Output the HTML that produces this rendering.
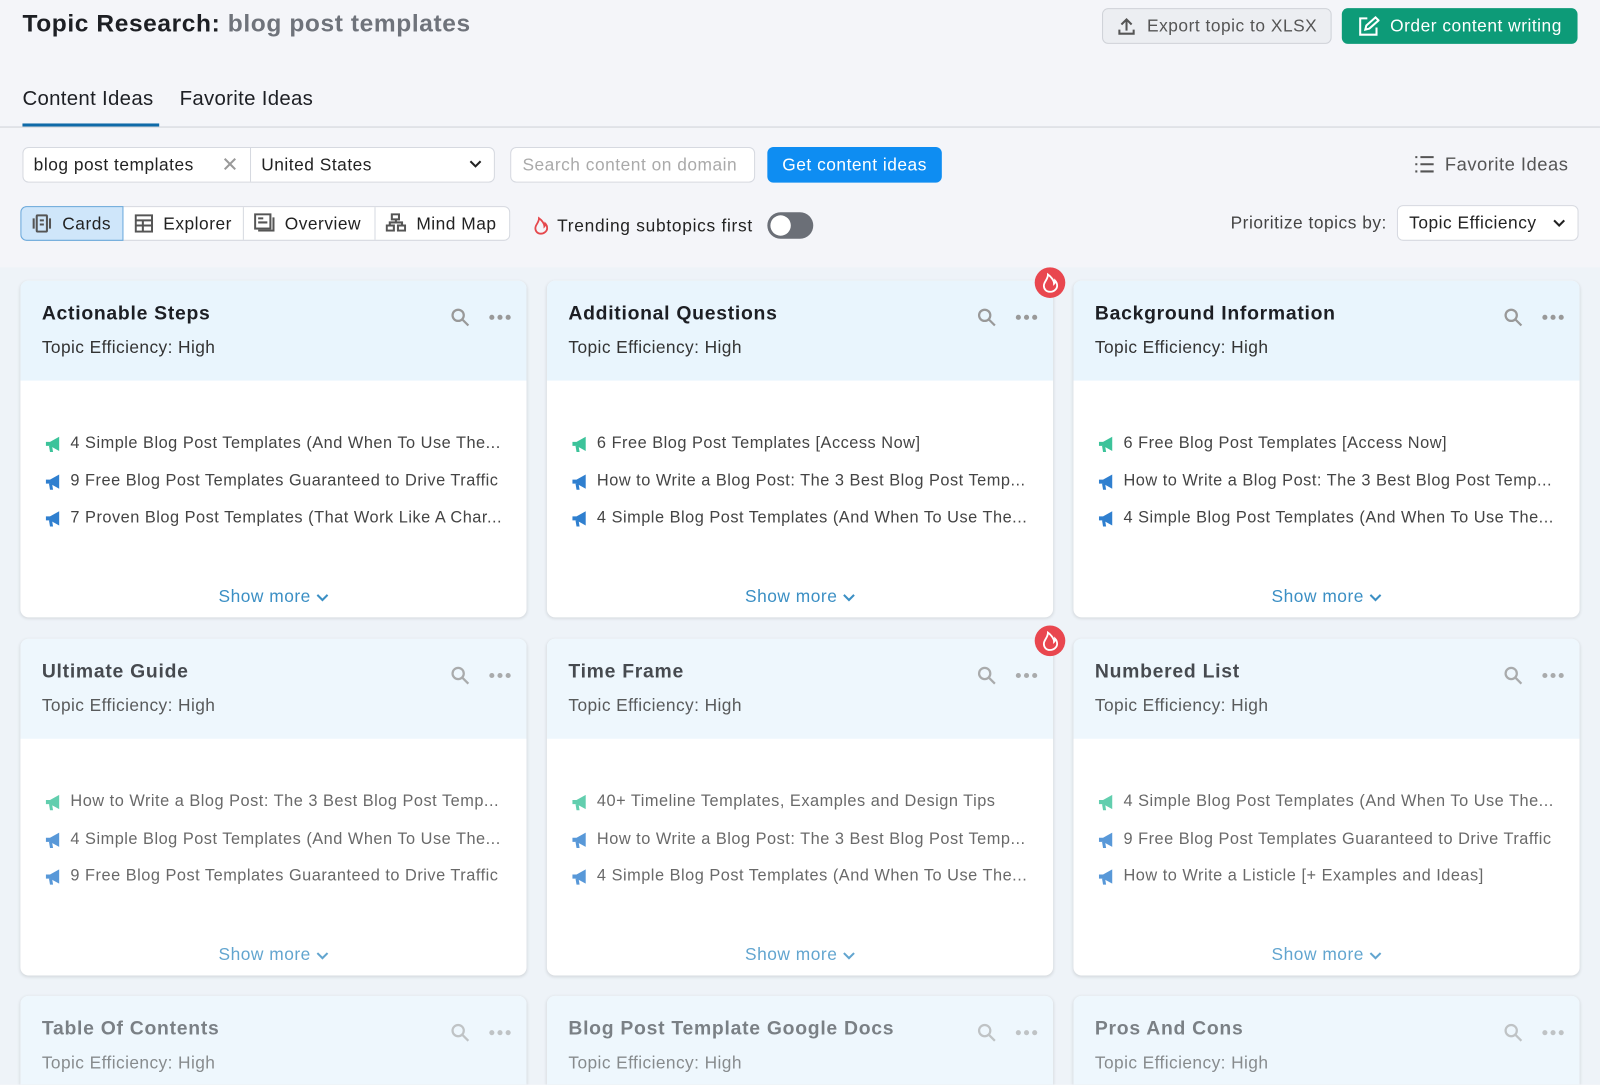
<!DOCTYPE html>
<html><head><meta charset="utf-8"><style>
*{box-sizing:border-box;margin:0;padding:0}
html,body{width:1600px;height:1085px;overflow:hidden;background:#f4f5f9;font-family:"Liberation Sans",sans-serif;letter-spacing:0.5px}
#w{position:absolute;left:0;top:0;width:1568px;height:1063px;transform:scale(1.0204);transform-origin:0 0;overflow:hidden}
.a{position:absolute;white-space:nowrap}
.btn{position:absolute;border-radius:6px;font-size:17px;display:flex;align-items:center;justify-content:center;gap:10px}
.box{position:absolute;background:#fff;border:1px solid #d6d9e0;border-radius:6px}
.card{position:absolute;width:496px;height:330px;background:#fff;border-radius:8px;box-shadow:0 1px 3px rgba(0,0,0,.12);overflow:hidden}
.hd{height:98px;background:#e9f5fd;padding:22px 21px;position:relative}
.t{font-size:19px;font-weight:bold;color:#1d1f24;letter-spacing:0.7px}
.e{font-size:17px;color:#333;margin-top:12px;letter-spacing:0.4px}
.ic{position:absolute;top:26px;right:15px;display:flex;gap:18px;align-items:center}
.it{font-size:16px;color:#444;height:36.5px;display:flex;align-items:center;gap:8px;padding-left:23px;letter-spacing:0.5px}
.items{padding-top:44px}
.sm{position:absolute;bottom:10px;left:0;width:100%;text-align:center;color:#3b8fc4;font-size:17px}
.fire{position:absolute;width:30px;height:30px;border-radius:50%;background:#e9474f;display:flex;align-items:center;justify-content:center}
</style></head><body><div id="w">
<div class="a" style="left:22px;top:10px;font-size:24px;font-weight:bold;color:#1d1f24;letter-spacing:0.6px">Topic Research: <span style="color:#6f737b">blog post templates</span></div>
<div class="btn" style="left:1080px;top:8px;width:225px;height:35px;background:#eceef2;border:1px solid #cfd2d8;color:#555">
<svg width="20" height="20" viewBox="0 0 20 20" fill="none" stroke="#555" stroke-width="2"><path d="M10 14V3M5 8l5-5 5 5M3 13v4h14v-4"/></svg>Export topic to XLSX</div>
<div class="btn" style="left:1315px;top:8px;width:231px;height:35px;background:#0d9b78;color:#fff">
<svg width="22" height="22" viewBox="0 0 22 22" fill="none" stroke="#fff" stroke-width="2"><path d="M10 3H3v16h16v-7M8 14l1-4 9-8 3 3-9 8z"/></svg>Order content writing</div>
<div class="a" style="left:22px;top:86px;font-size:20px;color:#1d1f24;letter-spacing:0.3px">Content Ideas</div>
<div class="a" style="left:176px;top:86px;font-size:20px;color:#1d1f24;letter-spacing:0.3px">Favorite Ideas</div>
<div class="a" style="left:22px;top:121px;width:134px;height:3px;background:#0f6aa8"></div>
<div class="a" style="left:0;top:124px;width:1568px;height:1px;background:#cfd2d8"></div>
<div class="box" style="left:22px;top:144px;width:463px;height:35px"></div>
<div class="a" style="left:245px;top:145px;width:1px;height:33px;background:#d6d9e0"></div>
<div class="a" style="left:33px;top:152px;font-size:17px;color:#222">blog post templates</div>
<div class="a" style="left:217px;top:149px;font-size:20px;color:#999">✕</div>
<div class="a" style="left:256px;top:152px;font-size:17px;color:#222">United States</div>
<svg class="a" style="left:459px;top:156px" width="14" height="10" viewBox="0 0 14 10" fill="none" stroke="#222" stroke-width="2"><path d="M2 2l5 5 5-5"/></svg>
<div class="box" style="left:500px;top:144px;width:240px;height:35px;color:#aaa;font-size:17px;padding:7px 11px">Search content on domain</div>
<div class="btn" style="left:752px;top:144px;width:171px;height:35px;background:#0e8df2;color:#fff">Get content ideas</div>
<svg class="a" style="left:1386px;top:152px" width="20" height="18" viewBox="0 0 20 18" fill="none" stroke="#555" stroke-width="2"><path d="M1 2h2M6 2h13M1 9h2M6 9h13M1 16h2M6 16h13"/></svg>
<div class="a" style="left:1416px;top:151px;font-size:18px;color:#555">Favorite Ideas</div>
<div class="box" style="left:20px;top:202px;width:480px;height:34px"></div>
<div class="a" style="left:20px;top:202px;width:101px;height:34px;background:#cfe6fa;border:1px solid #6aa9dc;border-radius:6px 0 0 6px"></div>
<div class="a" style="left:238px;top:203px;width:1px;height:32px;background:#d6d9e0"></div>
<div class="a" style="left:367px;top:203px;width:1px;height:32px;background:#d6d9e0"></div>
<svg class="a" style="left:31px;top:210px" width="20" height="18" viewBox="0 0 20 18" fill="none" stroke="#555" stroke-width="2"><rect x="5" y="1" width="10" height="16" rx="1"/><path d="M2 4v10M18 4v10M8 6h4M8 10h4"/></svg>
<div class="a" style="left:61px;top:210px;font-size:17px;color:#222">Cards</div>
<svg class="a" style="left:132px;top:210px" width="18" height="18" viewBox="0 0 18 18" fill="none" stroke="#555" stroke-width="2"><rect x="1" y="1" width="16" height="16"/><path d="M1 6h16M1 11h16M8 6v11"/></svg>
<div class="a" style="left:160px;top:210px;font-size:17px;color:#222">Explorer</div>
<svg class="a" style="left:249px;top:209px" width="20" height="18" viewBox="0 0 20 18" fill="none" stroke="#555" stroke-width="2"><rect x="1" y="1" width="15" height="14"/><path d="M4 5h5M4 9h9M19 4v13H4"/></svg>
<div class="a" style="left:279px;top:210px;font-size:17px;color:#222">Overview</div>
<svg class="a" style="left:378px;top:209px" width="20" height="18" viewBox="0 0 20 18" fill="none" stroke="#555" stroke-width="2"><rect x="6" y="1" width="7" height="5"/><rect x="1" y="12" width="7" height="5"/><rect x="12" y="12" width="7" height="5"/><path d="M10 6v3M4 12V9h12v3"/></svg>
<div class="a" style="left:408px;top:210px;font-size:17px;color:#222">Mind Map</div>
<svg class="a" style="left:522px;top:211px" width="16" height="20" viewBox="0 0 18 20" fill="none" stroke="#e5484d" stroke-width="2"><path d="M9 19c-4 0-6-3-6-6 0-4 4-6 4-11 3 2 6 6 6 9 1-1 1-2 1-3 2 2 2 4 2 5 0 3-3 6-7 6z"/></svg>
<div class="a" style="left:546px;top:212px;font-size:17px;color:#222;letter-spacing:0.7px">Trending subtopics first</div>
<div class="a" style="left:752px;top:208px;width:45px;height:26px;border-radius:13px;background:#6b6f77"><div style="position:absolute;left:3px;top:3px;width:20px;height:20px;border-radius:50%;background:#fff"></div></div>
<div class="a" style="left:1206px;top:209px;font-size:17px;color:#444">Prioritize topics by:</div>
<div class="box" style="left:1369px;top:201px;width:178px;height:35px;font-size:17px;color:#222;padding:7px 11px">Topic Efficiency</div>
<svg class="a" style="left:1521px;top:214px" width="14" height="10" viewBox="0 0 14 10" fill="none" stroke="#222" stroke-width="2"><path d="M2 2l5 5 5-5"/></svg>
<div class="a" style="left:0;top:262px;width:1568px;height:801px;background:#eef3f8"></div>
<div id="cards"></div>
</div>
<script>
var mg=function(c){return '<svg width="18" height="18" viewBox="0 0 18 18"><path d="M2 7h4l9-5v14l-9-5H2z" fill="'+c+'"/><path d="M5 11l1 6h3l-1-6z" fill="'+c+'"/></svg>'};
var data=[
["Actionable Steps",0,["4 Simple Blog Post Templates (And When To Use The...","9 Free Blog Post Templates Guaranteed to Drive Traffic","7 Proven Blog Post Templates (That Work Like A Char..."]],
["Additional Questions",1,["6 Free Blog Post Templates [Access Now]","How to Write a Blog Post: The 3 Best Blog Post Temp...","4 Simple Blog Post Templates (And When To Use The..."]],
["Background Information",0,["6 Free Blog Post Templates [Access Now]","How to Write a Blog Post: The 3 Best Blog Post Temp...","4 Simple Blog Post Templates (And When To Use The..."]],
["Ultimate Guide",0,["How to Write a Blog Post: The 3 Best Blog Post Temp...","4 Simple Blog Post Templates (And When To Use The...","9 Free Blog Post Templates Guaranteed to Drive Traffic"]],
["Time Frame",1,["40+ Timeline Templates, Examples and Design Tips","How to Write a Blog Post: The 3 Best Blog Post Temp...","4 Simple Blog Post Templates (And When To Use The..."]],
["Numbered List",0,["4 Simple Blog Post Templates (And When To Use The...","9 Free Blog Post Templates Guaranteed to Drive Traffic","How to Write a Listicle [+ Examples and Ideas]"]],
["Table Of Contents",0,[]],["Blog Post Template Google Docs",0,[]],["Pros And Cons",0,[]]];
var xs=[20,536,1052],ys=[275,626,976],ops=[1,0.8,0.55],h='';
data.forEach(function(d,i){var r=Math.floor(i/3),x=xs[i%3],y=ys[r],o=ops[r];
h+='<div class="card" style="left:'+x+'px;top:'+y+'px;'+(r==2?'height:87px;border-radius:8px 8px 0 0':'')+'"><div class="hd" style="background:'+(o<1?'#eef7fd':'#e9f5fd')+'"><div style="opacity:'+o+'"><div class="t">'+d[0]+'</div><div class="e">Topic Efficiency: High</div></div><div class="ic" style="opacity:'+o+'"><svg width="20" height="20" viewBox="0 0 20 20" fill="none" stroke="#999" stroke-width="2.2"><circle cx="8" cy="8" r="5.5"/><path d="M12 12l6 6"/></svg><svg width="22" height="6"><circle cx="3" cy="3" r="2.5" fill="#999"/><circle cx="11" cy="3" r="2.5" fill="#999"/><circle cx="19" cy="3" r="2.5" fill="#999"/></svg></div></div><div class="items" style="opacity:'+o+'">';
d[2].forEach(function(t,j){h+='<div class="it">'+mg(j==0?'#3cc39a':'#2f7fcf')+t+'</div>'});
h+='</div>'+(d[2].length?'<div class="sm" style="opacity:'+o+'">Show more <svg width="12" height="8" viewBox="0 0 12 8" fill="none" stroke="#3b8fc4" stroke-width="2"><path d="M1 1l5 5 5-5"/></svg></div>':'')+'</div>';
if(d[1])h+='<div class="fire" style="left:'+(x+478)+'px;top:'+(y-13)+'px"><svg width="18" height="20" viewBox="0 0 18 20" fill="none" stroke="#fff" stroke-width="1.8"><path d="M9 19c-4 0-6-3-6-6 0-4 4-6 4-11 3 2 6 6 6 9 1-1 1-2 1-3 2 2 2 4 2 5 0 3-3 6-7 6z"/></svg></div>';
});
document.getElementById('cards').innerHTML=h;
</script>
</body></html>
